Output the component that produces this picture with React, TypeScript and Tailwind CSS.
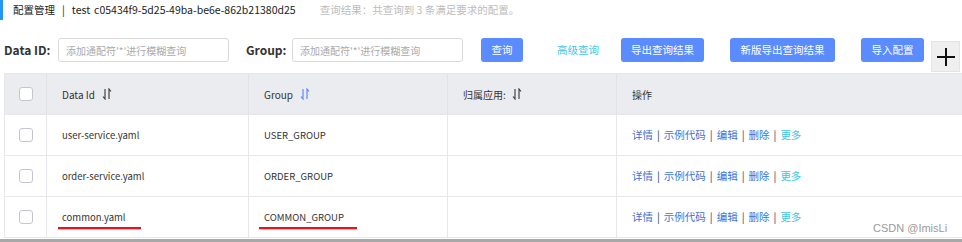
import React from "react";

const rows = [
  { id: "user-service.yaml", group: "USER_GROUP" },
  { id: "order-service.yaml", group: "ORDER_GROUP" },
  { id: "common.yaml", group: "COMMON_GROUP", marked: true },
];

function SortIcon({ color }: { color: string }) {
  return (
    <svg width="10" height="12" viewBox="0 0 10 12" fill="none" stroke={color} strokeWidth="1.2">
      <path d="M3 1v10L1 8.5" />
      <path d="M7 11V1l2 2.5" />
    </svg>
  );
}

function Checkbox() {
  return <span className="block w-[14px] h-[14px] rounded-[3px] border border-[#c4c6cf] bg-white" />;
}

export default function App() {
  const font = "font-['Noto_Sans_CJK_SC','Noto_Sans',sans-serif]";

  return (
    <div className={`relative w-[962px] h-[242px] overflow-hidden bg-white text-[#333] ${font}`}>
      {/* title */}
      <div className="flex items-center h-[20px] border-l-[3px] border-[#2196f3] pl-[10px] text-[10.5px] text-[#222]">
        <span>配置管理</span>
        <span className="mx-[7px]">|</span>
        <span>test</span>
        <span className="ml-[4px]">c05434f9-5d25-49ba-be6e-862b21380d25</span>
        <span className="ml-[24px] text-[10.5px] text-[#bcbcbc]">查询结果：共查询到 3 条满足要求的配置。</span>
      </div>

      {/* search bar */}
      <div className="flex items-start h-[35px] mt-[18px] pl-[4px]">
        <label className="flex items-center h-[24px] w-[54px] text-[12px] font-bold text-[#333]">Data ID:</label>
        <div className="flex items-center w-[171px] h-[24px] px-[7px] border border-[#d9d9d9] rounded-[3px] text-[10px] text-[#aaa]">
          添加通配符'*'进行模糊查询
        </div>
        <label className="flex items-center h-[24px] w-[46px] ml-[17px] text-[12px] font-bold text-[#333]">Group:</label>
        <div className="flex items-center w-[171px] h-[24px] px-[7px] border border-[#d9d9d9] rounded-[3px] text-[10px] text-[#aaa]">
          添加通配符'*'进行模糊查询
        </div>
        <button className="ml-[18px] w-[42px] h-[24px] rounded-[3px] bg-[#5b8cff] text-white text-[10.5px]">查询</button>
        <span className="flex items-center ml-[34px] h-[24px] text-[10.5px] text-[#3fc6e6]">高级查询</span>
        <button className="ml-[22px] w-[83px] h-[24px] rounded-[3px] bg-[#5b8cff] text-white text-[10.5px]">导出查询结果</button>
        <button className="ml-[26px] w-[105px] h-[24px] rounded-[3px] bg-[#5b8cff] text-white text-[10.5px]">新版导出查询结果</button>
        <button className="ml-[26px] w-[63px] h-[24px] rounded-[3px] bg-[#5b8cff] text-white text-[10.5px]">导入配置</button>
        <div className="flex items-center justify-center ml-[7px] mt-[3px] w-[29px] h-[31px] bg-[#efefef] border border-[#e4e4e4]">
          <svg width="18" height="18" viewBox="0 0 18 18" stroke="#111" strokeWidth="2">
            <path d="M0 9h18M9 0v18" />
          </svg>
        </div>
      </div>

      {/* table */}
      <div className="ml-[4px] border-t border-l border-[#e6e7eb] text-[9.5px]">
        <div className="grid grid-cols-[42px_202px_199px_169px_1fr] h-[41px] bg-[#ebecf0] border-b border-[#e6e7eb] text-[10px]">
          <div className="flex items-center justify-center border-r border-[#e0e2e6]">
            <Checkbox />
          </div>
          <div className="flex items-center gap-[7px] px-[15px] border-r border-[#e0e2e6]">
            Data Id <SortIcon color="#444" />
          </div>
          <div className="flex items-center gap-[7px] px-[15px] border-r border-[#e0e2e6]">
            Group <SortIcon color="#5b8cff" />
          </div>
          <div className="flex items-center gap-[6px] px-[15px] border-r border-[#e0e2e6]">
            归属应用: <SortIcon color="#444" />
          </div>
          <div className="flex items-center px-[15px]">操作</div>
        </div>

        {rows.map((r) => (
          <div key={r.id} className="grid grid-cols-[42px_202px_199px_169px_1fr] h-[41px] border-b border-[#e6e7eb]">
            <div className="flex items-center justify-center border-r border-[#e6e7eb]">
              <Checkbox />
            </div>
            <div className="relative flex items-center px-[15px] border-r border-[#e6e7eb]">
              {r.id}
              {r.marked && (
                <span className="absolute left-[11px] top-[30px] w-[83px] h-[2px] bg-[#e8141b] shadow-[0_1px_1px_rgba(0,0,0,0.25)]" />
              )}
            </div>
            <div className="relative flex items-center px-[15px] border-r border-[#e6e7eb]">
              {r.group}
              {r.marked && (
                <span className="absolute left-[10px] top-[30px] w-[98px] h-[2px] bg-[#e8141b] shadow-[0_1px_1px_rgba(0,0,0,0.25)]" />
              )}
            </div>
            <div className="border-r border-[#e6e7eb]" />
            <div className="flex items-center px-[15px] text-[10.5px]">
              <span className="text-[#3a72d8]">详情</span>
              <span className="mx-[4px] text-[#2b3a66]">|</span>
              <span className="text-[#3a72d8]">示例代码</span>
              <span className="mx-[4px] text-[#2b3a66]">|</span>
              <span className="text-[#3a72d8]">编辑</span>
              <span className="mx-[4px] text-[#2b3a66]">|</span>
              <span className="text-[#3a72d8]">删除</span>
              <span className="mx-[4px] text-[#2b3a66]">|</span>
              <span className="text-[#3fc6e6]">更多</span>
            </div>
          </div>
        ))}
      </div>
      <div className="h-[1px]" />
      <div className="h-[3px] bg-[#a8a8a8]" />

      {/* watermark */}
      <span className="absolute left-[873px] top-[220px] text-[11px] text-[#9a9a9a] font-['Liberation_Sans',sans-serif]">
        CSDN @ImisLi
      </span>
    </div>
  );
}
